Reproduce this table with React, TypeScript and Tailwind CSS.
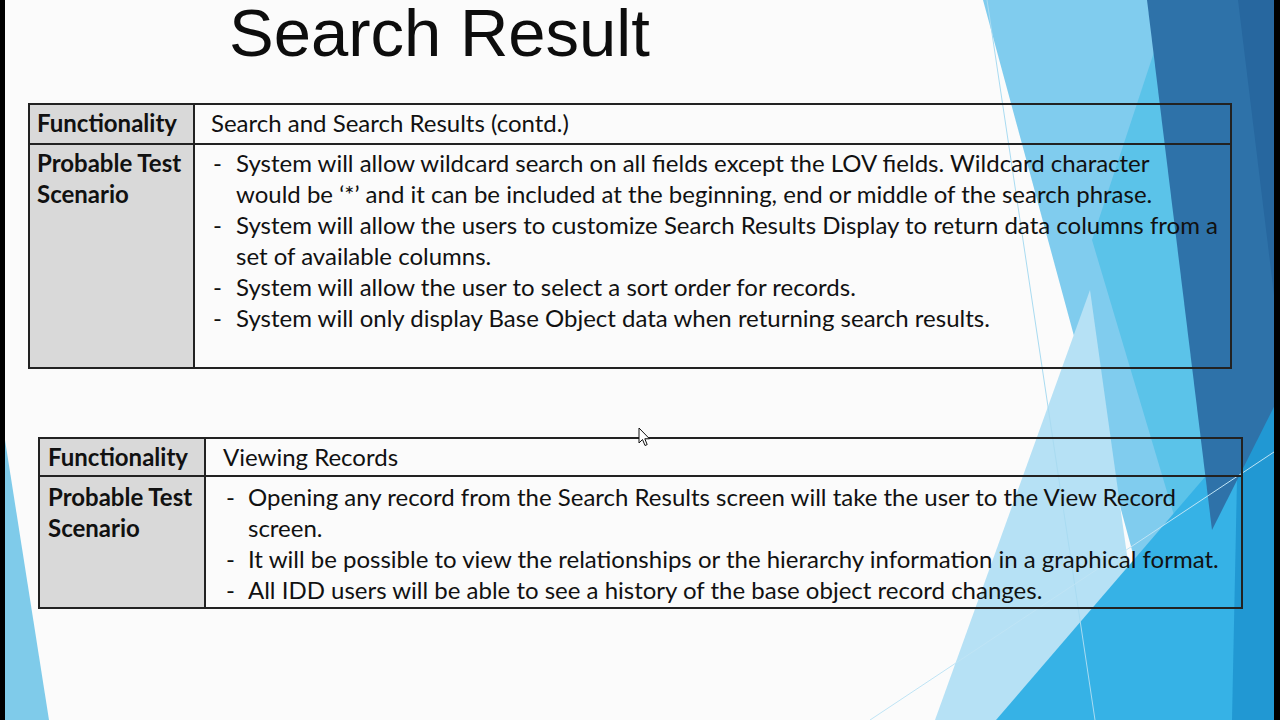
import React from "react";

const body = "font-['Lato',sans-serif] text-[24px] leading-[31px] text-[#111]";

function Bullet({ lines, dash }: { lines: string[]; dash: string }) {
    return (
        <div className="flex">
            <span className={`${dash} shrink-0`}>-</span>
            <div>
                {lines.map((l) => (
                    <div key={l} className="whitespace-nowrap">{l}</div>
                ))}
            </div>
        </div>
    );
}

function Backdrop() {
    return (
        <svg className="absolute inset-0 pointer-events-none" width="1269" height="720">
            <g transform="translate(-5,0)">
                <polygon points="5,440 5,720 49,720" fill="#7fcbea" />
                <polygon points="983,0 1280,0 1280,720 1178,720" fill="#80ccee" />
                <polygon points="1090,290 935,720 1150,720" fill="#b6e1f5" />
                <polygon points="1158,40 1092,240 1235,720 1280,720 1280,40" fill="#5bc3e9" />
                <polygon points="996,720 1285,384 1285,720" fill="#36b2e6" />
                <polygon points="1238,430 1285,384 1285,720 1232,720" fill="#2198d3" />
                <polygon points="1147,0 1285,0 1285,385 1212,530" fill="#2e72a9" />
                <polygon points="1238,0 1285,0 1285,385" fill="#27679f" />
                <line x1="987" y1="0" x2="1095" y2="720" stroke="#a9dbf1" strokeWidth="1" />
                <line x1="870" y1="720" x2="1280" y2="448" stroke="#bfe4f5" strokeWidth="1" />
            </g>
        </svg>
    );
}

function Cursor() {
    return (
        <svg className="absolute left-[633px] top-[427px]" width="14" height="22" viewBox="0 0 14 22">
            <path d="M1 1 L1 16 L4.5 12.5 L7 18.5 L9.2 17.6 L6.8 11.8 L11.5 11.8 Z" fill="#fff" stroke="#111" strokeWidth="1" />
        </svg>
    );
}

export default function App() {
    const first = [
        ["System will allow wildcard search on all fields except the LOV fields. Wildcard character", "would be \u2018*\u2019 and it can be included at the beginning, end or middle of the search phrase."],
        ["System will allow the users to customize Search Results Display to return data columns from a", "set of available columns."],
        ["System will allow the user to select a sort order for records."],
        ["System will only display Base Object data when returning search results."],
    ];
    const second = [
        ["Opening any record from the Search Results screen will take the user to the View Record", "screen."],
        ["It will be possible to view the relationships or the hierarchy information in a graphical format."],
        ["All IDD users will be able to see a history of the base object record changes."],
    ];

    return (
        <div className="w-[1280px] h-[720px] flex bg-black overflow-hidden">
            <div className="w-[5px] shrink-0 bg-black" />
            <div className="relative flex-1 bg-[#fbfbfb]">
                <Backdrop />

                <div className="relative flex flex-col">
                    <h1 className="pl-[224px] font-['Liberation_Sans',sans-serif] text-[67px] leading-[66px] text-[#0d0d0d]">
                        Search Result
                    </h1>

                    {/* table 1 */}
                    <div className={`${body} mt-[37px] ml-[23px] w-[1204px] border-2 border-[#222] grid grid-cols-[165px_1fr]`}>
                        <div className="h-[40px] bg-[#d9d9d9] border-r-2 border-b-2 border-[#222] pl-[7px] pt-[2px] font-bold">
                            Functionality
                        </div>
                        <div className="h-[40px] border-b-2 border-[#222] pl-[16px] pt-[2px]">
                            Search and Search Results (contd.)
                        </div>
                        <div className="h-[222px] bg-[#d9d9d9] border-r-2 border-[#222] pl-[7px] pt-[2px] font-bold">
                            <div>Probable Test</div>
                            <div>Scenario</div>
                        </div>
                        <div className="h-[222px] pl-[18px] pt-[2px]">
                            {first.map((b) => (
                                <Bullet key={b[0]} lines={b} dash="w-[23px]" />
                            ))}
                        </div>
                    </div>

                    {/* table 2 */}
                    <div className={`${body} mt-[68px] ml-[33px] w-[1205px] border-2 border-[#222] grid grid-cols-[166px_1fr]`}>
                        <div className="h-[38px] bg-[#d9d9d9] border-r-2 border-b-2 border-[#222] pl-[8px] pt-[2px] font-bold">
                            Functionality
                        </div>
                        <div className="h-[38px] border-b-2 border-[#222] pl-[17px] pt-[2px]">
                            Viewing Records
                        </div>
                        <div className="h-[130px] bg-[#d9d9d9] border-r-2 border-[#222] pl-[8px] pt-[4px] font-bold">
                            <div>Probable Test</div>
                            <div>Scenario</div>
                        </div>
                        <div className="h-[130px] pl-[20px] pt-[4px]">
                            {second.map((b) => (
                                <Bullet key={b[0]} lines={b} dash="w-[22px]" />
                            ))}
                        </div>
                    </div>
                </div>

                <Cursor />
            </div>
            <div className="w-[6px] shrink-0 bg-black" />
        </div>
    );
}
